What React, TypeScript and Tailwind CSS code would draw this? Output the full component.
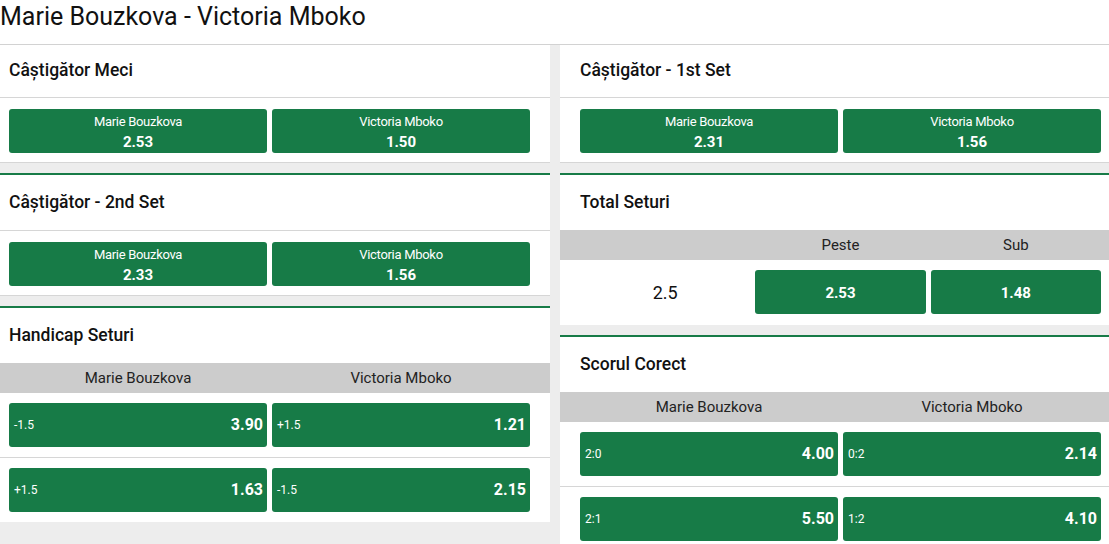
import React from 'react';

type Odd = { name?: string; label?: string; value: string };

const OddButton = ({ o }: { o: Odd }) => {
  if (o.label !== undefined) {
    return (
      <div className="h-[44px] rounded-[3px] bg-[#177b47] text-white flex items-center justify-between pl-[5px] pr-[4px]">
        <span className="text-[12px]">{o.label}</span>
        <span className="text-[16px] font-bold">{o.value}</span>
      </div>
    );
  }
  return (
    <div className="h-[44px] rounded-[3px] bg-[#177b47] text-white flex flex-col items-center justify-center pt-[2px]">
      {o.name && <span className="text-[13px] leading-[20px] tracking-[-0.3px]">{o.name}</span>}
      <span className="text-[15px] leading-[20px] font-bold">{o.value}</span>
    </div>
  );
};

const Title = ({ text, pad, h }: { text: string; pad: string; h: string }) => (
  <div className={`${h} ${pad} flex items-center text-[17.5px] font-medium text-[#111]`}>{text}</div>
);

const TwoWay = ({ title, odds, side, first }: { title: string; odds: Odd[]; side: 'l' | 'r'; first?: boolean }) => {
  const pad = side === 'l' ? 'pl-[9px] pr-[20px]' : 'pl-[20px] pr-[9px]';
  return (
    <div className={`bg-white border-b border-[#d6d6d6] ${first ? '' : 'border-t-2 border-t-[#177b47]'}`}>
      <Title text={title} pad={pad} h={first ? 'h-[52px] pb-[2px]' : 'h-[55px]'} />
      <div className={`border-t border-[#d6d6d6] ${pad} pt-[11px] pb-[9px] grid grid-cols-2 gap-[5px]`}>
        {odds.map((o, i) => <OddButton key={i} o={o} />)}
      </div>
    </div>
  );
};

const GridMarket = ({ title, rows, side }: { title: string; rows: Odd[][]; side: 'l' | 'r' }) => {
  const pad = side === 'l' ? 'pl-[9px] pr-[20px]' : 'pl-[20px] pr-[9px]';
  return (
    <div className="bg-white border-t-2 border-t-[#177b47]">
      <Title text={title} pad={pad} h="h-[55px]" />
      <div className={`h-[30px] bg-[#cccccc] ${pad} grid grid-cols-2 gap-[5px] items-center text-[15px] text-[#222] text-center`}>
        <span>Marie Bouzkova</span>
        <span>Victoria Mboko</span>
      </div>
      {rows.map((r, i) => (
        <div key={i} className={`${pad} pt-[10px] pb-[10px] grid grid-cols-2 gap-[5px] ${i < rows.length - 1 ? 'border-b border-[#d6d6d6]' : ''}`}>
          {r.map((o, j) => <OddButton key={j} o={o} />)}
        </div>
      ))}
    </div>
  );
};

export default function App() {
  return (
    <div className="w-[1109px] h-[544px] overflow-hidden bg-[#ededed] text-[#111]" style={{ fontFamily: 'Roboto, "Noto Sans", sans-serif' }}>
      <div className="h-[45px] bg-white border-b border-[#d2d2d2] text-[25px] leading-[25px] pt-[4px]">
        Marie Bouzkova - Victoria Mboko
      </div>
      <div className="flex gap-[10px]">
        {/* left column */}
        <div className="w-[550px] shrink-0 flex flex-col gap-[10px]">
          <TwoWay
            first
            side="l"
            title="Câștigător Meci"
            odds={[{ name: 'Marie Bouzkova', value: '2.53' }, { name: 'Victoria Mboko', value: '1.50' }]}
          />
          <TwoWay
            side="l"
            title="Câștigător - 2nd Set"
            odds={[{ name: 'Marie Bouzkova', value: '2.33' }, { name: 'Victoria Mboko', value: '1.56' }]}
          />
          <GridMarket
            side="l"
            title="Handicap Seturi"
            rows={[
              [{ label: '-1.5', value: '3.90' }, { label: '+1.5', value: '1.21' }],
              [{ label: '+1.5', value: '1.63' }, { label: '-1.5', value: '2.15' }],
            ]}
          />
        </div>

        {/* right column */}
        <div className="w-[550px] shrink-0 flex flex-col gap-[10px]">
          <TwoWay
            first
            side="r"
            title="Câștigător - 1st Set"
            odds={[{ name: 'Marie Bouzkova', value: '2.31' }, { name: 'Victoria Mboko', value: '1.56' }]}
          />
          <div className="bg-white border-t-2 border-t-[#177b47]">
            <Title text="Total Seturi" pad="pl-[20px] pr-[9px]" h="h-[55px]" />
            <div className="h-[30px] bg-[#cccccc] pl-[20px] pr-[9px] grid grid-cols-3 gap-[5px] items-center text-[15px] text-[#222] text-center">
              <span></span>
              <span>Peste</span>
              <span>Sub</span>
            </div>
            <div className="pl-[20px] pr-[9px] pt-[10px] pb-[11px] grid grid-cols-3 gap-[5px] items-center">
              <span className="text-center text-[18px]">2.5</span>
              <OddButton o={{ value: '2.53' }} />
              <OddButton o={{ value: '1.48' }} />
            </div>
          </div>
          <GridMarket
            side="r"
            title="Scorul Corect"
            rows={[
              [{ label: '2:0', value: '4.00' }, { label: '0:2', value: '2.14' }],
              [{ label: '2:1', value: '5.50' }, { label: '1:2', value: '4.10' }],
            ]}
          />
        </div>
      </div>
    </div>
  );
}
